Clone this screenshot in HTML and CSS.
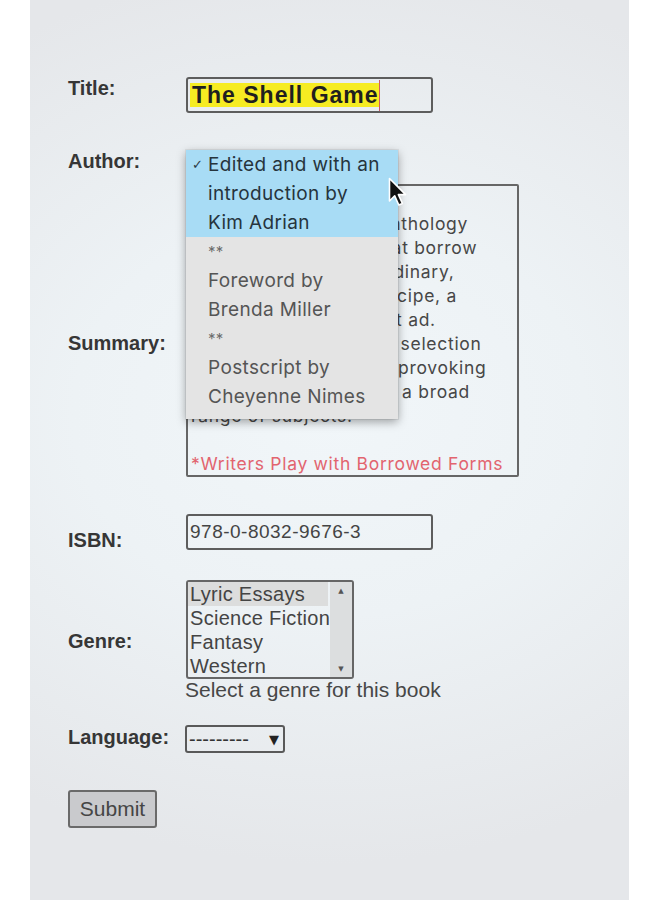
FILE: index.html
```html
<!DOCTYPE html>
<html lang="en">
<head>
<meta charset="utf-8">
<title>Book form</title>
<link rel="stylesheet" href="styles.css">
</head>
<body>
<div class="panel">
  <form class="form">
    <div class="row row-title">
      <div class="label">Title:</div>
      <div class="field">
        <div class="text-input title-input"><mark class="hl">The Shell Game</mark><span class="caret"></span></div>
      </div>
    </div>

    <div class="row row-author">
      <div class="label">Author:</div>
      <div class="field author-field">
        <div class="menu">
          <div class="opt opt-selected"><span class="check">✓</span>Edited and with an<br>introduction by<br>Kim Adrian</div>
          <div class="opt opt-stars">**</div>
          <div class="opt">Foreword by<br>Brenda Miller</div>
          <div class="opt opt-stars">**</div>
          <div class="opt">Postscript by<br>Cheyenne Nimes</div>
        </div>
        <svg class="pointer" width="20" height="31" viewBox="0 0 20 31" aria-hidden="true">
          <path d="M1.5 1.5 L1.5 24 L6.7 18.8 L10.8 28 L14.4 26.4 L10.4 17.6 L17.6 17.6 Z" fill="#111" stroke="#fff" stroke-width="1.6" stroke-linejoin="round"/>
        </svg>
      </div>
    </div>

    <div class="row row-summary">
      <div class="label">Summary:</div>
      <div class="field">
        <div class="textarea"><span class="ta-line">The Shell Game is a</span><span class="ta-line">groundbreaking new anthology</span><span class="ta-line">of brief lyric essays that borrow</span><span class="ta-line">their forms from the ordinary,</span><span class="ta-line">such as a timeline, a recipe, a</span><span class="ta-line">crossword, or a lost pet ad.</span><span class="ta-line">This unique and quirky selection</span><span class="ta-line">of witty, wise, thought-provoking</span><span class="ta-line">essays that cover such a broad</span><span class="ta-line">range of subjects.</span><span class="ta-line">&nbsp;</span><span class="ta-line ta-red">*Writers Play with Borrowed Forms</span></div>
      </div>
    </div>

    <div class="row row-isbn">
      <div class="label">ISBN:</div>
      <div class="field">
        <input class="text-input isbn-input" type="text" value="978-0-8032-9676-3" readonly>
      </div>
    </div>

    <div class="row row-genre">
      <div class="label">Genre:</div>
      <div class="field">
        <div class="listbox">
          <ul class="list-options">
            <li class="list-opt list-opt-selected">Lyric Essays</li>
            <li class="list-opt">Science Fiction</li>
            <li class="list-opt">Fantasy</li>
            <li class="list-opt">Western</li>
          </ul>
          <div class="scrollbar"><span class="sb-arrow">▲</span><span class="sb-arrow">▼</span></div>
        </div>
        <div class="help">Select a genre for this book</div>
      </div>
    </div>

    <div class="row row-language">
      <div class="label">Language:</div>
      <div class="field">
        <div class="select"><span class="select-value">---------</span><span class="select-arrow">▼</span></div>
      </div>
    </div>

    <div class="row row-submit">
      <button class="submit" type="button">Submit</button>
    </div>
  </form>
</div>
</body>
</html>
```

FILE: styles.css
```css
html, body {
  margin: 0;
  padding: 0;
  background: #ffffff;
}

.panel {
  margin-left: 30px;
  width: 599px;
  min-height: 900px;
  background:
    radial-gradient(ellipse 95% 50% at 50% 46%, #f1f6f9 0%, #edf2f5 45%, #e5e7ea 100%);
  font-family: "Liberation Sans", Arial, sans-serif;
  color: #444;
}

.form {
  padding: 77px 0 0 38px;
}

.row {
  display: flex;
  align-items: flex-start;
}

.label {
  width: 118px;
  flex-shrink: 0;
  font-size: 20px;
  line-height: 22px;
  font-weight: bold;
  color: #363636;
}

.field {
  flex: 1;
}

/* Title */
.text-input {
  box-sizing: border-box;
  width: 247px;
  height: 36px;
  border: 2px solid #5d5d5d;
  border-radius: 3px;
  background: transparent;
}

.title-input {
  display: flex;
  align-items: center;
  padding: 0 2px;
}

.hl {
  background: #f6ec22;
  color: #1f1f1f;
  font-size: 23px;
  font-weight: bold;
  letter-spacing: 1px;
  line-height: 24px;
  padding: 0 0 0 2px;
}

.caret {
  display: inline-block;
  width: 1.5px;
  height: 31px;
  background: #cf5a66;
}

/* Author */
.row-author {
  margin-top: 37px;
}

.author-field {
  position: relative;
  height: 22px;
}

.menu {
  position: absolute;
  top: 0;
  left: 0;
  z-index: 2;
  width: 212px;
  background: #e4e4e4;
  box-shadow: 0 3px 9px rgba(0, 0, 0, 0.35), 0 0 0 1px rgba(0, 0, 0, 0.06);
  padding-bottom: 8px;
  font-family: Inter, "Liberation Sans", sans-serif;
  font-size: 19px;
  line-height: 29px;
  letter-spacing: 0.35px;
  color: #555;
}

.opt {
  position: relative;
  padding-left: 22px;
}

.opt-selected {
  background: #a8dcf5;
  color: #26343d;
}

.check {
  position: absolute;
  left: 6px;
  top: 0;
  font-family: "DejaVu Sans", sans-serif;
  font-size: 13px;
  color: #2b3a44;
}

.opt-stars {
  font-size: 15px;
  color: #6c6c6c;
}

.pointer {
  position: absolute;
  left: 202px;
  top: 27px;
  z-index: 3;
}

/* Summary */
.row-summary {
  margin-top: 12px;
}

.row-summary .label { padding-top: 148px; }

.textarea {
  box-sizing: border-box;
  width: 333px;
  height: 293px;
  border: 2px solid #666;
  border-radius: 2px;
  padding: 2px 3px;
  font-family: Inter, "Liberation Sans", sans-serif;
  font-size: 17.5px;
  letter-spacing: 0.7px;
  line-height: 24px;
  color: #474747;
  overflow: hidden;
}

.ta-line {
  display: block;
  white-space: nowrap;
}

.ta-red {
  color: #e2646f;
}

/* ISBN */
.row-isbn {
  margin-top: 37px;
}

.row-isbn .label { padding-top: 15px; }

.isbn-input {
  display: block;
  padding: 0 2px;
  font-family: "Liberation Sans", Arial, sans-serif;
  font-size: 19px;
  letter-spacing: 0.5px;
  color: #444;
  outline: none;
}

/* Genre */
.row-genre {
  margin-top: 29px;
}

.row-genre .label { padding-top: 50px; }

.listbox {
  box-sizing: border-box;
  width: 168px;
  height: 99px;
  border: 2px solid #666;
  border-radius: 3px;
  display: flex;
  overflow: hidden;
}

.list-options {
  list-style: none;
  margin: 0;
  padding: 0;
  width: 142px;
  font-size: 20px;
  letter-spacing: 0.3px;
  line-height: 24px;
  color: #444;
}

.list-opt {
  padding-left: 2px;
  white-space: nowrap;
}

.list-opt-selected {
  background: #dcdddd;
  margin-right: 2px;
}

.scrollbar {
  flex: 1;
  background: #dcdedf;
  display: flex;
  flex-direction: column;
  justify-content: space-between;
  align-items: center;
  padding: 3px 0 2px;
}

.sb-arrow {
  font-family: "DejaVu Sans", sans-serif;
  font-size: 7px;
  line-height: 12px;
  color: #555;
}

.help {
  margin-left: -1px;
  font-size: 21px;
  line-height: 22px;
  color: #474747;
}

/* Language */
.row-language {
  margin-top: 24px;
}

.row-language .label { padding-top: 1px; }

.select {
  box-sizing: border-box;
  margin-left: -1px;
  width: 100px;
  height: 28px;
  border: 2px solid #595959;
  border-radius: 3px;
  display: flex;
  align-items: center;
  justify-content: space-between;
  padding: 0 4px 0 2px;
}

.select-value {
  font-size: 20px;
  line-height: 22px;
  color: #333;
}

.select-arrow {
  font-family: "DejaVu Sans", sans-serif;
  font-size: 13px;
  color: #222;
}

/* Submit */
.row-submit {
  margin-top: 37px;
}

.submit {
  box-sizing: border-box;
  width: 89px;
  height: 38px;
  padding: 0;
  border: 2px solid #6a6a6a;
  border-radius: 3px;
  background: #c9cacd;
  font-family: "Liberation Sans", Arial, sans-serif;
  font-size: 21px;
  color: #454545;
}
```
